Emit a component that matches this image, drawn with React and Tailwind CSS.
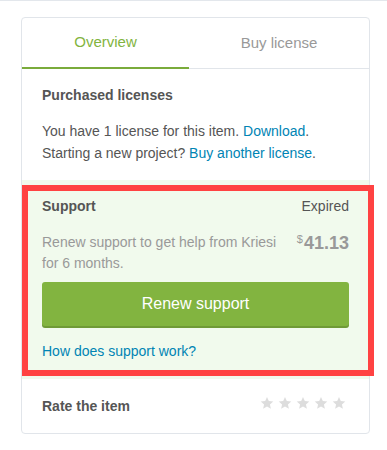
function Stars() {
  return (
    <div className="flex items-center gap-[4px]">
      {[0, 1, 2, 3, 4].map((i) => (
        <svg key={i} width="14" height="14" viewBox="0 0 24 24">
          <path d="M12 1.5l3.1 7.1 7.7.7-5.8 5.1 1.7 7.6L12 18l-6.7 4 1.7-7.6L1.2 9.3l7.7-.7z" fill="#dddddd" />
        </svg>
      ))}
    </div>
  )
}

export default function App() {
  return (
    <div className="min-h-[450px] bg-white border-t border-[#e3e7ec] pt-4 pl-[21px] pr-[17px] font-['Liberation_Sans',Arial,sans-serif] text-[14px] text-[#555]">
      <div className="relative border border-[#e1e5ea] rounded-[4px] bg-white">
        <div className="flex border-b border-[#e1e5ea] h-[51px]">
          <div className="w-[167px] flex items-center justify-center text-[15px] text-[#82b440] border-b-2 border-[#7aab3b] -mb-px">Overview</div>
          <div className="flex-1 flex items-center justify-center text-[15px] text-[#999]">Buy license</div>
        </div>

        <div className="px-5 pt-4 pb-4">
          <div className="font-bold leading-5">Purchased licenses</div>
          <p className="mt-[15px] leading-[22px]">
            You have 1 license for this item. <a className="text-[#0084b4]">Download</a>.
            <br />
            Starting a new project? <a className="text-[#0084b4]">Buy another license</a>.
          </p>
        </div>

        <div className="bg-[#f1faed] px-5 pt-4 pb-[18px]">
          <div className="flex justify-between leading-5">
            <span className="font-bold">Support</span>
            <span>Expired</span>
          </div>
          <div className="flex justify-between gap-5 mt-4">
            <p className="text-[#999] leading-[21px]">Renew support to get help from Kriesi for 6 months.</p>
            <div className="flex items-start text-[#999] shrink-0 leading-none mt-[2px]">
              <span className="text-[11px] mr-[1px]">$</span>
              <span className="text-[18px] font-bold">41.13</span>
            </div>
          </div>
          <button className="mt-2 w-full h-[44px] rounded-[3px] bg-[#82b440] shadow-[0_2px_0_#6f9a37] text-white text-[16px]">Renew support</button>
          <div className="mt-[15px] leading-5">
            <a className="text-[#0084b4]">How does support work?</a>
          </div>
        </div>

        <div className="flex items-center justify-between px-5 h-[54px]">
          <span className="font-bold">Rate the item</span>
          <div className="-mt-[6px] mr-[3px]"><Stars /></div>
        </div>

        <div className="absolute left-0 top-[167px] w-[352px] h-[191px] border-[6px] border-[#ff4242] pointer-events-none" />
      </div>
    </div>
  )
}
